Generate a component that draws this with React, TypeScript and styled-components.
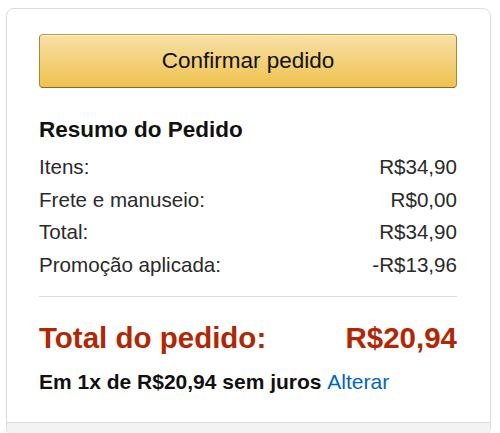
import React from "react";
import styled, { createGlobalStyle } from "styled-components";

const Global = createGlobalStyle`
  html, body {
    margin: 0;
    padding: 0;
    background: #ffffff;
    overflow: hidden;
  }
  body {
    font-family: "Liberation Sans", Arial, sans-serif;
    color: #111111;
  }
`;

const Page = styled.div`
  padding: 8px 0 0 6px;
  width: 500px;
  height: 433px;
  box-sizing: border-box;
  overflow: hidden;
`;

const Card = styled.div`
  width: 485px;
  box-sizing: border-box;
  border: 1px solid #dddddd;
  border-radius: 8px;
  overflow: hidden;
  background: #ffffff;
`;

const Body = styled.div`
  padding: 25px 33px 26px 32px;
  display: flex;
  flex-direction: column;
`;

const ConfirmButton = styled.button`
  width: 418px;
  height: 54px;
  box-sizing: border-box;
  border: 1px solid;
  border-color: #c29b3f #a88734 #846a29;
  border-radius: 4px;
  background: linear-gradient(to bottom, #f7e0a6, #f0c24e);
  box-shadow: inset 0 1px 0 rgba(255, 255, 255, 0.6);
  font-family: "Liberation Sans", Arial, sans-serif;
  font-size: 22.5px;
  color: #111111;
  cursor: pointer;
  padding: 0;
`;

const Heading = styled.h3`
  margin: 28px 0 7px;
  font-size: 22.5px;
  line-height: 28px;
  font-weight: bold;
  color: #111111;
`;

const Row = styled.div`
  display: flex;
  justify-content: space-between;
  font-size: 20.6px;
  line-height: 32.5px;
  color: #2a2a2a;
`;

const Divider = styled.hr`
  border: 0;
  border-top: 1px solid #dddddd;
  margin: 15px 0 0;
  height: 0;
`;

const GrandTotal = styled.div`
  display: flex;
  justify-content: space-between;
  margin-top: 23px;
  font-size: 29.5px;
  line-height: 36px;
  font-weight: bold;
  color: #b12704;
`;

const Installment = styled.div`
  margin-top: 12px;
  font-size: 21px;
  line-height: 28px;
  font-weight: bold;
  color: #111111;
`;

const Link = styled.a`
  font-weight: normal;
  color: #0066c0;
  text-decoration: none;
`;

const Footer = styled.div`
  border-top: 1px solid #dddddd;
  background: #f3f3f3;
  height: 12px;
`;

const rows: [string, string][] = [
  ["Itens:", "R$34,90"],
  ["Frete e manuseio:", "R$0,00"],
  ["Total:", "R$34,90"],
  ["Promoção aplicada:", "-R$13,96"],
];

export default function App() {
  return (
    <>
      <Global />
      <Page>
        <Card>
          <Body>
            <ConfirmButton>Confirmar pedido</ConfirmButton>
            <Heading>Resumo do Pedido</Heading>
            {rows.map(([label, value]) => (
              <Row key={label}>
                <span>{label}</span>
                <span>{value}</span>
              </Row>
            ))}
            <Divider />
            <GrandTotal>
              <span>Total do pedido:</span>
              <span>R$20,94</span>
            </GrandTotal>
            <Installment>
              Em 1x de R$20,94 sem juros <Link href="#">Alterar</Link>
            </Installment>
          </Body>
          <Footer />
        </Card>
      </Page>
    </>
  );
}
